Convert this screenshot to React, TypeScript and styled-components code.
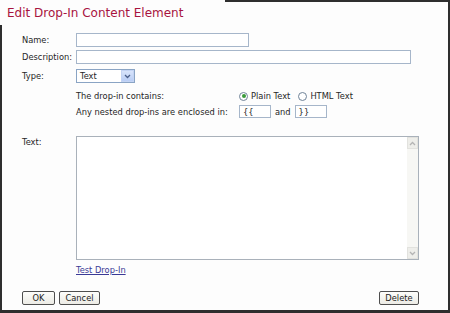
import React from "react";
import styled, {createGlobalStyle} from "styled-components";

const GlobalStyle = createGlobalStyle`
  html, body {
    margin: 0;
    padding: 0;
    background: #fdfdfd;
  }
  body {
    font-family: "DejaVu Sans", Verdana, sans-serif;
  }
`;

const Frame = styled.div`
  position: relative;
  box-sizing: border-box;
  width: 450px;
  height: 313px;
  padding-top: 5px;
  background: #fdfdfd;
  border-right: 2px solid #2e2e2e;
  border-bottom: 3px solid #2e2e2e;
  color: #262626;
  font-size: 8.3px;
  line-height: 12px;

  /* window edge: only partly visible on top and left */
  &::before {
    content: "";
    position: absolute;
    top: 0;
    left: 225px;
    right: 0;
    height: 2px;
    background: #2e2e2e;
  }
  &::after {
    content: "";
    position: absolute;
    left: 0;
    top: 25px;
    bottom: -3px;
    width: 2px;
    background: #2e2e2e;
  }
`;

const Title = styled.h1`
  margin: 0 0 0 7px;
  font-size: 12px;
  line-height: 16px;
  font-weight: normal;
  color: #a8143f;
`;

const Form = styled.div`
  display: flex;
  flex-direction: column;
  padding: 0 29px 0 22px;
`;

const Row = styled.div<{ $mt: number; $top?: boolean }>`
  display: grid;
  grid-template-columns: 54px 1fr;
  align-items: ${p => p.$top ? "start" : "center"};
  margin-top: ${p => p.$mt}px;
`;

const Label = styled.div`
  white-space: nowrap;
`;

const Field = styled.div`
  display: flex;
  align-items: center;
  min-width: 0;
`;

const TextInput = styled.div<{ $w: number; $h?: number }>`
  box-sizing: border-box;
  width: ${p => p.$w}px;
  height: ${p => p.$h ?? 14}px;
  border: 1px solid #a6b6ca;
  background: #fff;
  padding-left: 3px;
  display: flex;
  align-items: center;
  font-size: 8.3px;
  color: #222;
`;

const Select = styled.div`
  box-sizing: border-box;
  width: 59px;
  height: 14px;
  border: 1px solid #8aa4c4;
  background: #fff;
  display: flex;
  align-items: center;
  justify-content: space-between;
  padding: 0 0 0 3px;
`;

const SelectArrow = styled.div`
  box-sizing: border-box;
  width: 13px;
  height: 12px;
  background: linear-gradient(#d8e4fb, #b9cdf5);
  border: 1px solid #c4d4f4;
  display: flex;
  align-items: center;
  justify-content: center;
`;

const Sub = styled.div`
  display: grid;
  grid-template-columns: 163px auto;
  align-items: center;
`;

const Inline = styled.div<{ $gap: number }>`
  display: flex;
  align-items: center;
  gap: ${p => p.$gap}px;
`;

const Radio = styled.span<{ $on?: boolean }>`
  box-sizing: border-box;
  width: 9px;
  height: 9px;
  border-radius: 50%;
  border: 1px solid #6f8398;
  background: #fff;
  display: inline-flex;
  align-items: center;
  justify-content: center;
  margin-right: 3px;

  &::after {
    content: "";
    width: 4px;
    height: 4px;
    border-radius: 50%;
    background: ${p => p.$on ? "#3a9a3a" : "transparent"};
  }
`;

const RadioLabel = styled.label`
  display: inline-flex;
  align-items: center;
`;

const TextArea = styled.div`
  box-sizing: border-box;
  width: 343px;
  height: 124px;
  border: 1px solid #a9b1ba;
  background: #fff;
  display: flex;
  justify-content: flex-end;
`;

const ScrollRail = styled.div`
  width: 11px;
  height: 100%;
  background: #f7f7f4;
  display: flex;
  flex-direction: column;
  justify-content: space-between;
`;

const ScrollButton = styled.div`
  box-sizing: border-box;
  height: 12px;
  background: #eeeeea;
  border: 1px solid #e2e2de;
  display: flex;
  align-items: center;
  justify-content: center;
`;

const Link = styled.a`
  color: #3a3a96;
  text-decoration: underline;
  cursor: pointer;
`;

const ButtonBar = styled.div`
  display: flex;
  align-items: center;
  gap: 4px;
  margin-top: 15px;
`;

const Button = styled.button<{ $w: number; $push?: boolean }>`
  box-sizing: border-box;
  width: ${p => p.$w}px;
  height: 14px;
  margin-left: ${p => p.$push ? "auto" : "0"};
  padding: 0;
  border: 1px solid #4e4e4e;
  border-radius: 2px;
  background: linear-gradient(#fdfdfb, #ecebe5);
  font-family: "DejaVu Sans", Verdana, sans-serif;
  font-size: 8.3px;
  line-height: 12px;
  color: #222;
`;

const Chevron: React.FC<{ up?: boolean; color: string }> = ({up, color}) => (
    <svg width="7" height="5" viewBox="0 0 7 5">
        <path d={up ? "M1 4 L3.5 1.5 L6 4" : "M1 1 L3.5 3.5 L6 1"} fill="none" stroke={color} strokeWidth="1.3"/>
    </svg>
);

const App: React.FC = () => {
    return (
        <>
            <GlobalStyle/>
            <Frame>
                <Title>Edit Drop-In Content Element</Title>
                <Form>
                    <Row $mt={12}>
                        <Label>Name:</Label>
                        <Field><TextInput $w={173}/></Field>
                    </Row>
                    <Row $mt={3}>
                        <Label>Description:</Label>
                        <Field><TextInput $w={335}/></Field>
                    </Row>
                    <Row $mt={5}>
                        <Label>Type:</Label>
                        <Field>
                            <Select>
                                <span>Text</span>
                                <SelectArrow><Chevron color="#4b5f8a"/></SelectArrow>
                            </Select>
                        </Field>
                    </Row>
                    <Row $mt={7}>
                        <span/>
                        <Sub>
                            <span>The drop-in contains:</span>
                            <Inline $gap={8}>
                                <RadioLabel><Radio $on/>Plain Text</RadioLabel>
                                <RadioLabel><Radio/>HTML Text</RadioLabel>
                            </Inline>
                        </Sub>
                    </Row>
                    <Row $mt={3}>
                        <span/>
                        <Sub>
                            <span>Any nested drop-ins are enclosed in:</span>
                            <Inline $gap={4}>
                                <TextInput $w={32} $h={13}>{"{{"}</TextInput>
                                <span>and</span>
                                <TextInput $w={32} $h={13}>{"}}"}</TextInput>
                            </Inline>
                        </Sub>
                    </Row>
                    <Row $mt={18} $top>
                        <Label>Text:</Label>
                        <TextArea>
                            <ScrollRail>
                                <ScrollButton><Chevron up color="#b4b4b4"/></ScrollButton>
                                <ScrollButton><Chevron color="#b4b4b4"/></ScrollButton>
                            </ScrollRail>
                        </TextArea>
                    </Row>
                    <Row $mt={4}>
                        <span/>
                        <Field><Link>Test Drop-In</Link></Field>
                    </Row>
                    <ButtonBar>
                        <Button $w={33}>OK</Button>
                        <Button $w={41}>Cancel</Button>
                        <Button $w={40} $push>Delete</Button>
                    </ButtonBar>
                </Form>
            </Frame>
        </>
    );
};

export default App;
